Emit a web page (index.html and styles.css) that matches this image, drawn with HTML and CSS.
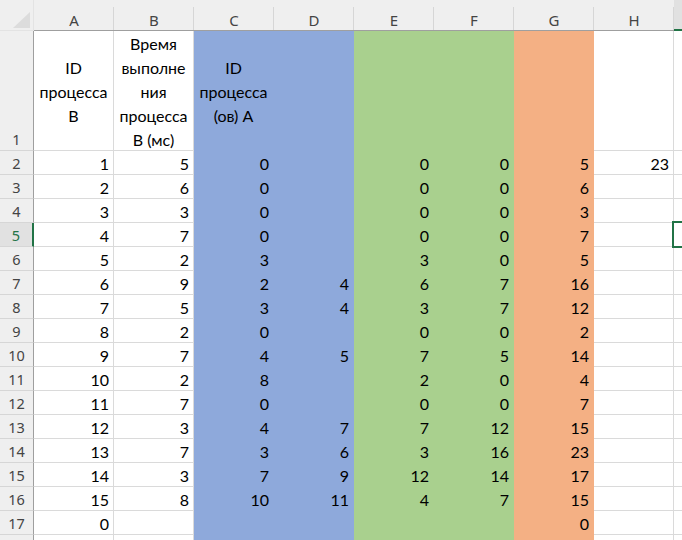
FILE: index.html
```html
<!DOCTYPE html>
<html lang="ru">
<head>
<meta charset="utf-8">
<title>Sheet</title>
<link rel="stylesheet" href="styles.css">
</head>
<body>
<div class="sheet">
  <div class="corner"><svg width="17" height="16" viewBox="0 0 17 16"><polygon points="17,0 17,16 0,16" fill="#dcdcdc"/></svg></div>
  <div class="hd">A</div><div class="hd">B</div><div class="hd">C</div><div class="hd">D</div><div class="hd">E</div><div class="hd">F</div><div class="hd">G</div><div class="hd">H</div><div class="hd sel"></div>

  <div class="rh">1</div>
  <div class="c t">ID<br>процесса<br>B</div>
  <div class="c t">Время<br>выполне<br>ния<br>процесса<br>В (мс)</div>
  <div class="c t b">ID<br>процесса<br>(ов) A</div>
  <div class="c b"></div><div class="c g"></div><div class="c g"></div><div class="c o"></div><div class="c"></div><div class="c"></div>

  <div class="rh">2</div><div class="c">1</div><div class="c">5</div><div class="c b">0</div><div class="c b"></div><div class="c g">0</div><div class="c g">0</div><div class="c o">5</div><div class="c">23</div><div class="c"></div>
  <div class="rh">3</div><div class="c">2</div><div class="c">6</div><div class="c b">0</div><div class="c b"></div><div class="c g">0</div><div class="c g">0</div><div class="c o">6</div><div class="c"></div><div class="c"></div>
  <div class="rh">4</div><div class="c">3</div><div class="c">3</div><div class="c b">0</div><div class="c b"></div><div class="c g">0</div><div class="c g">0</div><div class="c o">3</div><div class="c"></div><div class="c"></div>
  <div class="rh sel">5</div><div class="c">4</div><div class="c">7</div><div class="c b">0</div><div class="c b"></div><div class="c g">0</div><div class="c g">0</div><div class="c o">7</div><div class="c"></div><div class="c cur"></div>
  <div class="rh">6</div><div class="c">5</div><div class="c">2</div><div class="c b">3</div><div class="c b"></div><div class="c g">3</div><div class="c g">0</div><div class="c o">5</div><div class="c"></div><div class="c"></div>
  <div class="rh">7</div><div class="c">6</div><div class="c">9</div><div class="c b">2</div><div class="c b">4</div><div class="c g">6</div><div class="c g">7</div><div class="c o">16</div><div class="c"></div><div class="c"></div>
  <div class="rh">8</div><div class="c">7</div><div class="c">5</div><div class="c b">3</div><div class="c b">4</div><div class="c g">3</div><div class="c g">7</div><div class="c o">12</div><div class="c"></div><div class="c"></div>
  <div class="rh">9</div><div class="c">8</div><div class="c">2</div><div class="c b">0</div><div class="c b"></div><div class="c g">0</div><div class="c g">0</div><div class="c o">2</div><div class="c"></div><div class="c"></div>
  <div class="rh">10</div><div class="c">9</div><div class="c">7</div><div class="c b">4</div><div class="c b">5</div><div class="c g">7</div><div class="c g">5</div><div class="c o">14</div><div class="c"></div><div class="c"></div>
  <div class="rh">11</div><div class="c">10</div><div class="c">2</div><div class="c b">8</div><div class="c b"></div><div class="c g">2</div><div class="c g">0</div><div class="c o">4</div><div class="c"></div><div class="c"></div>
  <div class="rh">12</div><div class="c">11</div><div class="c">7</div><div class="c b">0</div><div class="c b"></div><div class="c g">0</div><div class="c g">0</div><div class="c o">7</div><div class="c"></div><div class="c"></div>
  <div class="rh">13</div><div class="c">12</div><div class="c">3</div><div class="c b">4</div><div class="c b">7</div><div class="c g">7</div><div class="c g">12</div><div class="c o">15</div><div class="c"></div><div class="c"></div>
  <div class="rh">14</div><div class="c">13</div><div class="c">7</div><div class="c b">3</div><div class="c b">6</div><div class="c g">3</div><div class="c g">16</div><div class="c o">23</div><div class="c"></div><div class="c"></div>
  <div class="rh">15</div><div class="c">14</div><div class="c">3</div><div class="c b">7</div><div class="c b">9</div><div class="c g">12</div><div class="c g">14</div><div class="c o">17</div><div class="c"></div><div class="c"></div>
  <div class="rh">16</div><div class="c">15</div><div class="c">8</div><div class="c b">10</div><div class="c b">11</div><div class="c g">4</div><div class="c g">7</div><div class="c o">15</div><div class="c"></div><div class="c"></div>
  <div class="rh">17</div><div class="c">0</div><div class="c"></div><div class="c b"></div><div class="c b"></div><div class="c g"></div><div class="c g"></div><div class="c o">0</div><div class="c"></div><div class="c"></div>
  <div class="rh"></div><div class="c"></div><div class="c"></div><div class="c b"></div><div class="c b"></div><div class="c g"></div><div class="c g"></div><div class="c o"></div><div class="c"></div><div class="c"></div>
</div>
</body>
</html>
```
FILE: styles.css
```css
* { box-sizing: border-box; margin: 0; padding: 0; }
html, body { width: 682px; height: 540px; overflow: hidden; background: #fff; }
.sheet {
  display: grid;
  grid-template-columns: 34px repeat(8, 80px) 80px;
  grid-template-rows: 31px 120px repeat(17, 24px);
  width: 748px;
  font-family: Lato, "Noto Sans", sans-serif;
  font-size: 16px;
  color: #000;
}
.corner {
  background: #efefef;
  border-right: 1px solid #e3e3e3;
  border-bottom: 1px solid #e3e3e3;
  display: flex;
  align-items: flex-end;
  justify-content: flex-end;
  padding: 0 3px 2px 0;
}
.corner svg { display: block; }
.hd {
  background-color: #efefef;
  background-image: linear-gradient(#d6d6d6, #d6d6d6);
  background-size: 1px 23px;
  background-position: right bottom;
  background-repeat: no-repeat;
  border-bottom: 1px solid #9f9f9f;
  font-family: "Noto Sans", sans-serif;
  font-size: 15px;
  color: #444;
  display: flex;
  justify-content: center;
  align-items: center;
  padding-top: 9px;
}
.hd.sel { background-color: #e1e1e1; border-bottom: 2px solid #217346; }
.rh {
  background: #efefef;
  border-right: 1px solid #9f9f9f;
  border-bottom: 1px solid #d6d6d6;
  font-family: "Noto Sans", sans-serif;
  font-size: 14.5px;
  line-height: 17px;
  color: #444;
  display: flex;
  justify-content: center;
  align-items: flex-end;
  padding-bottom: 2px;
}
.rh.sel { background: #e1e1e1; color: #217346; border-right: 2px solid #217346; }
.c {
  border-right: 1px solid #dadada;
  border-bottom: 1px solid #dadada;
  display: flex;
  align-items: flex-end;
  justify-content: flex-end;
  padding: 0 4px 2px 4px;
  line-height: 17px;
  white-space: nowrap;
}
.c.t {
  justify-content: center;
  align-items: center;
  text-align: center;
  line-height: 24px;
  padding: 3px 0 0 0;
}
.c.b { background: #8ea9db; border-color: #8ea9db; }
.c.g { background: #a9d08e; border-color: #a9d08e; }
.c.o { background: #f4b084; border-color: #f4b084; }
.c.cur { position: relative; }
.c.cur::after {
  content: "";
  position: absolute;
  left: -2px;
  top: -2px;
  right: -2px;
  bottom: -2px;
  border: 2px solid #217346;
}
```
